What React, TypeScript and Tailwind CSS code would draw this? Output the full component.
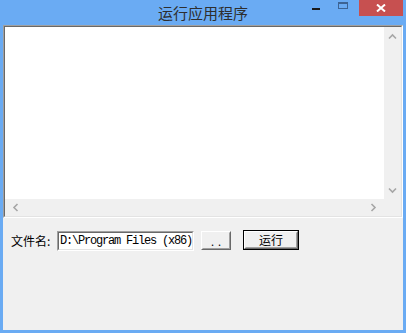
import React from "react";

const cjk = { fontFamily: '"Noto Sans CJK SC", "Noto Sans", sans-serif' };

function Chevron({ dir }: { dir: "up" | "down" | "left" | "right" }) {
  const rot = { up: 0, right: 90, down: 180, left: 270 }[dir];
  return (
    <svg width="9" height="9" viewBox="0 0 9 9" style={{ transform: `rotate(${rot}deg)` }}>
      <path d="M1 6.5 L4.5 3 L8 6.5" fill="none" stroke="#a6a6a6" strokeWidth="1.6" />
    </svg>
  );
}

function RunDialog() {
  return (
    <div className="w-[406px] h-[333px] bg-[#6aabf3] flex flex-col overflow-hidden select-none">
      {/* title bar */}
      <div className="relative h-[25px] flex items-center justify-center shrink-0">
        <span className="text-[15px] leading-none text-[#2e2e2e] -mt-[1px]" style={cjk}>
          运行应用程序
        </span>
        <div className="absolute right-[3px] top-0 flex items-start">
          <div className="w-[18px] h-[16px] flex items-center justify-center mr-[8px]">
            <div className="w-[8px] h-[2px] bg-[#1a1a1a] mt-[2px]" />
          </div>
          <div className="w-[20px] h-[16px] flex items-center justify-center mr-[6px]">
            <div className="w-[10px] h-[7px] border border-t-2 border-[#3d6494] -mt-[5px]" />
          </div>
          <div className="w-[44px] h-[16px] bg-[#c75050] flex items-center justify-center">
            <svg width="10" height="8" viewBox="0 0 10 8">
              <path d="M1 0.5 L9 7.5 M9 0.5 L1 7.5" stroke="#fff" strokeWidth="2" />
            </svg>
          </div>
        </div>
      </div>

      {/* client area */}
      <div className="mx-[3px] mb-[3px] flex-1 bg-[#f0f0f0] flex flex-col">
        {/* memo */}
        <div className="h-[193px] border border-t-[#a0a0a0] border-l-[#a0a0a0] border-r-white border-b-white">
          <div className="h-full border border-t-[#696969] border-l-[#696969] border-r-[#e3e3e3] border-b-[#e3e3e3] grid grid-cols-[1fr_17px] grid-rows-[1fr_17px]">
            <div className="bg-white" />
            <div className="bg-[#f0f0f0] flex flex-col items-center justify-between pt-[5px] pb-[4px]">
              <Chevron dir="up" />
              <Chevron dir="down" />
            </div>
            <div className="bg-[#f0f0f0] flex items-center justify-between pl-[6px] pr-[6px]">
              <Chevron dir="left" />
              <Chevron dir="right" />
            </div>
            <div className="bg-[#f0f0f0]" />
          </div>
        </div>

        {/* file row */}
        <div className="flex items-start pl-[8px] mt-[12px] text-[12px] text-black" style={cjk}>
          <span className="w-[46px] leading-[20px] mt-[1px]">文件名:</span>
          <div className="w-[137px] h-[20px] mt-[1px] border border-t-[#a0a0a0] border-l-[#a0a0a0] border-r-white border-b-white">
            <div
              className="h-full border border-t-[#696969] border-l-[#696969] border-r-[#e3e3e3] border-b-[#e3e3e3] bg-white overflow-hidden whitespace-nowrap pl-[1px] text-[12px] leading-[16px] tracking-[-1.2px]"
              style={{ fontFamily: '"Liberation Mono", monospace' }}
            >
              D:\Program Files (x86)
            </div>
          </div>
          <div className="ml-[7px] mt-[1px] w-[30px] h-[19px] border border-t-white border-l-white border-r-[#696969] border-b-[#696969]">
            <div className="h-full border border-t-[#f0f0f0] border-l-[#f0f0f0] border-r-[#a0a0a0] border-b-[#a0a0a0] flex items-end justify-center text-[11px] leading-[12px] pb-[1px] tracking-[4px] pl-[4px]">
              ..
            </div>
          </div>
          <div className="ml-[12px] w-[56px] h-[20px] border border-black">
            <div className="h-full border border-t-white border-l-white border-r-[#696969] border-b-[#696969]">
              <div className="h-full border border-r-[#a0a0a0] border-b-[#a0a0a0] border-t-transparent border-l-transparent flex items-center justify-center leading-none">
                运行
              </div>
            </div>
          </div>
        </div>
      </div>
    </div>
  );
}

export default function App() {
  return <RunDialog />;
}
